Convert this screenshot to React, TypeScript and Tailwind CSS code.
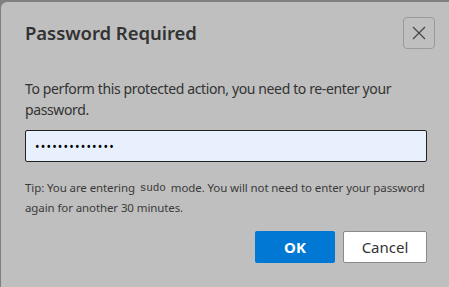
export default function App() {
  return (
    <div className="h-[287px] w-[449px] overflow-hidden bg-[#7f7f7f] pl-px pt-[2px] font-['Noto_Sans',sans-serif]">
      <div className="h-[290px] w-[460px] rounded-md bg-[#bfbfbf] text-[#333]">
        <div className="flex w-[434px] items-center justify-between pl-6 pt-[15px]">
          <h1 className="text-[18.5px] font-semibold tracking-[-0.05px] text-[#333]">Password Required</h1>
          <button className="flex h-8 w-8 items-center justify-center rounded-[4px] border border-[#9a9a9a]">
            <svg width="14" height="14" viewBox="0 0 14 14" stroke="#444" strokeWidth="1.2">
              <path d="M1 1l12 12M13 1L1 13" />
            </svg>
          </button>
        </div>
        <div className="w-[426px] pl-6 pt-[29px]">
          <p className="text-[14px] leading-[21px] tracking-[-0.38px]">
            To perform this protected action, you need to re-enter your password.
          </p>
          <input
            className="mt-[10px] h-8 w-full rounded-[2px] border border-[#222] bg-[#e8f0fe] px-[9px] text-[12px] tracking-[1.2px] text-black outline-none"
            readOnly
            type="password"
            value="aaaaaaaaaaaaaa"
          />
          <p className="mt-[16px] text-[11.5px] leading-[20px] tracking-[-0.1px] text-[#3a3a3a]">
            <span>Tip: You are entering </span>
            <code className="inline-block px-[2px] align-top font-['Liberation_Mono',monospace] text-[11px] leading-[20px]">sudo</code>
            <span> mode. You will not need to enter your password again for another 30 minutes.</span>
          </p>
          <div className="mt-[13px] flex justify-end gap-2">
            <button className="h-8 w-20 rounded-[2px] bg-[#0078d4] text-[15px] font-bold text-white">OK</button>
            <button className="h-8 w-[84px] rounded-[2px] border border-[#8a8a8a] bg-white text-[15px] text-[#333]">Cancel</button>
          </div>
        </div>
      </div>
    </div>
  );
}
